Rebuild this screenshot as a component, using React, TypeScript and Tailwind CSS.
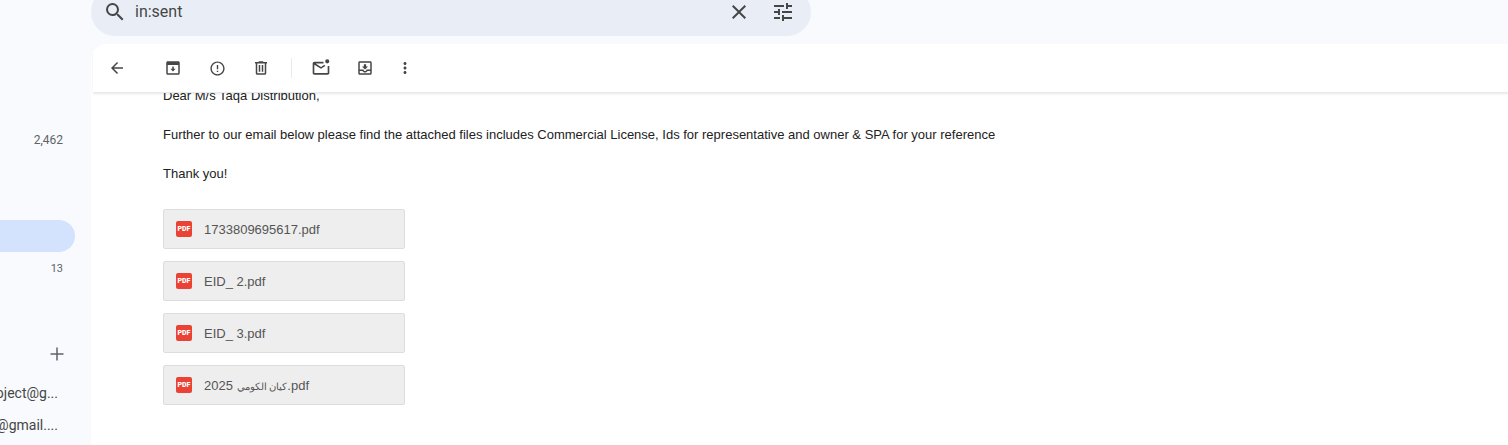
const iconPaths = {
  search: "M15.5 14h-.79l-.28-.27A6.471 6.471 0 0 0 16 9.5 6.5 6.5 0 1 0 9.5 16c1.61 0 3.09-.59 4.23-1.57l.27.28v.79l5 4.99L20.49 19l-4.99-5zm-6 0C7.01 14 5 11.99 5 9.5S7.01 5 9.5 5 14 7.01 14 9.5 11.99 14 9.5 14z",
  close: "M19 6.41L17.59 5 12 10.59 6.41 5 5 6.41 10.59 12 5 17.59 6.41 19 12 13.41 17.59 19 19 17.59 13.41 12z",
  tune: "M3 17v2h6v-2H3zM3 5v2h10V5H3zm10 16v-2h8v-2h-8v-2h-2v6h2zM7 9v2H3v2h4v2h2V9H7zm14 4v-2H11v2h10zm-6-4h2V7h4V5h-4V3h-2v6z",
  back: "M20 11H7.83l5.59-5.59L12 4l-8 8 8 8 1.41-1.41L7.83 13H20v-2z",
  archive: "M19 3H5c-1.1 0-2 .9-2 2v14c0 1.1.9 2 2 2h14c1.1 0 2-.9 2-2V5c0-1.1-.9-2-2-2zm0 16H5V8h14v11zM13 10h-2v3H8.5l3.5 3.5 3.5-3.5H13z",
  report: "M11 15h2v2h-2zm0-8h2v6h-2zm.99-5C6.47 2 2 6.48 2 12s4.47 10 9.99 10C17.52 22 22 17.52 22 12S17.52 2 11.99 2zM12 20c-4.42 0-8-3.58-8-8s3.58-8 8-8 8 3.58 8 8-3.58 8-8 8z",
  trash: "M15 4V3H9v1H4v2h1v13c0 1.1.9 2 2 2h10c1.1 0 2-.9 2-2V6h1V4h-5zm2 15H7V6h10v13zM9 8h2v9H9zm4 0h2v9h-2z",
  unread: "M20 9.5V18H4V8l8 5 5.2-3.3-1.1-1.6L12 10.7 5.6 6.5H15V4.5H4c-1.1 0-2 .9-2 2V18c0 1.1.9 2 2 2h16c1.1 0 2-.9 2-2V9.5h-2zM19.5 1.5a2.5 2.5 0 1 0 0 5 2.5 2.5 0 0 0 0-5z",
  move: "M19 3H5c-1.1 0-2 .9-2 2v14c0 1.1.9 2 2 2h14c1.1 0 2-.9 2-2V5c0-1.1-.9-2-2-2zm0 16H5v-3h3.56c.69 1.19 1.97 2 3.45 2s2.75-.81 3.45-2H19v3zm0-5h-4.99c0 1.1-.9 2-2 2s-2-.9-2-2H5V5h14v9zM16 10h-2.5V7h-3v3H8l4 4 4-4z",
  more: "M12 8c1.1 0 2-.9 2-2s-.9-2-2-2-2 .9-2 2 .9 2 2 2zm0 2c-1.1 0-2 .9-2 2s.9 2 2 2 2-.9 2-2-.9-2-2-2zm0 6c-1.1 0-2 .9-2 2s.9 2 2 2 2-.9 2-2-.9-2-2-2z",
};

function Icon({ name, className }: { name: keyof typeof iconPaths; className: string }) {
  return (
    <svg viewBox="0 0 24 24" className={className} fill="currentColor">
      <path d={iconPaths[name]} />
    </svg>
  );
}

function ToolButton({ name, width, size }: { name: keyof typeof iconPaths; width: string; size: string }) {
  return (
    <div className={`flex h-10 items-center justify-center ${width}`}>
      <Icon name={name} className={`${size} text-[#444746]`} />
    </div>
  );
}

function Attachment({ label, arabic }: { label: string; arabic?: string }) {
  return (
    <div className="flex h-10 w-[242px] items-center rounded-[2px] border border-[#dddddd] bg-[#eeeeee] pl-3 font-['Liberation_Sans',sans-serif] text-[13px] text-[#555555]">
      <div className="flex h-4 w-4 items-center justify-center rounded-[2px] bg-[#ea4335] font-['Roboto',sans-serif] text-[7px] font-black leading-none text-white">
        PDF
      </div>
      <span className={arabic ? "ml-3 mt-0.5 whitespace-nowrap" : "ml-3 whitespace-nowrap"}>
        {label}
        {arabic && <span className="text-[10px]">{arabic}</span>}
        {arabic && ".pdf"}
      </span>
    </div>
  );
}

export default function App() {
  return (
    <div className="flex h-[445px] w-[1508px] overflow-hidden bg-[#f8fafd] font-['Roboto',sans-serif]">
      <aside className="flex w-[91px] shrink-0 flex-col overflow-hidden text-[#5f6368]">
        <div className="mt-[124px] flex h-8 items-center justify-end pr-7 text-xs">2,462</div>
        <div className="mt-16 h-8 w-[75px] rounded-r-full bg-[#d3e3fd]" />
        <div className="flex h-8 items-center justify-end pr-7 pt-0.5 text-[11px]">13</div>
        <div className="mt-[54px] flex h-8 items-center justify-end pr-[26px]">
          <svg viewBox="0 0 16 16" className="h-4 w-4" fill="currentColor">
            <path d="M1.5 7.25h5.75V1.5h1.5v5.75h5.75v1.5H8.75v5.75h-1.5V8.75H1.5z" />
          </svg>
        </div>
        <div className="mt-[7px] flex h-8 items-center justify-end whitespace-nowrap pr-[33px] text-sm text-[#444746]">
          project@g...
        </div>
        <div className="flex h-8 items-center justify-end whitespace-nowrap pr-[33px] text-sm text-[#444746]">
          name@gmail....
        </div>
      </aside>

      <div className="flex min-w-0 flex-1 flex-col">
        <div className="h-11 shrink-0">
          <div className="-mt-3 flex h-12 w-[720px] items-center rounded-3xl bg-[#e9eef6] text-[#444746]">
            <Icon name="search" className="ml-3 h-6 w-6 shrink-0" />
            <span className="ml-[8px] text-base text-[#444746]">in:sent</span>
            <Icon name="close" className="ml-auto h-6 w-6 shrink-0" />
            <Icon name="tune" className="ml-5 mr-4 h-6 w-6 shrink-0" />
          </div>
        </div>

        <main className="flex min-h-0 flex-1 flex-col overflow-hidden rounded-tl-2xl bg-white">
          <div className="relative z-10 ml-0.5 flex h-[49px] shrink-0 items-center border-b border-[#e8eaed] bg-white pl-1 shadow-[0_1px_2px_rgba(60,64,67,0.12)]">
            <ToolButton name="back" width="w-10" size="h-[18px] w-[18px]" />
            <div className="w-[14px]" />
            <ToolButton name="archive" width="w-11" size="h-[18px] w-[18px]" />
            <ToolButton name="report" width="w-11" size="h-[17px] w-[17px]" />
            <ToolButton name="trash" width="w-11" size="h-[18px] w-[18px]" />
            <div className="mx-[7.5px] h-5 w-px bg-[#e8eaed]" />
            <ToolButton name="unread" width="w-11" size="h-5 w-5" />
            <ToolButton name="move" width="w-11" size="h-[18px] w-[18px]" />
            <ToolButton name="more" width="w-9" size="h-[18px] w-[18px]" />
          </div>

          <div className="pl-[72px] font-['Liberation_Sans',sans-serif] text-[13px] leading-[19px] text-[#222222]">
            <p className="-mt-[7px]">Dear M/s Taqa Distribution,</p>
            <p className="mt-5">
              Further to our email below please find the attached files includes Commercial License, Ids for representative and owner &amp; SPA for your reference
            </p>
            <p className="mt-5">Thank you!</p>
            <div className="mt-[26px] flex flex-col gap-3">
              <Attachment label="1733809695617.pdf" />
              <Attachment label="EID_ 2.pdf" />
              <Attachment label="EID_ 3.pdf" />
              <Attachment label="2025 " arabic="كيان الكومي" />
            </div>
          </div>
        </main>
      </div>
    </div>
  );
}
